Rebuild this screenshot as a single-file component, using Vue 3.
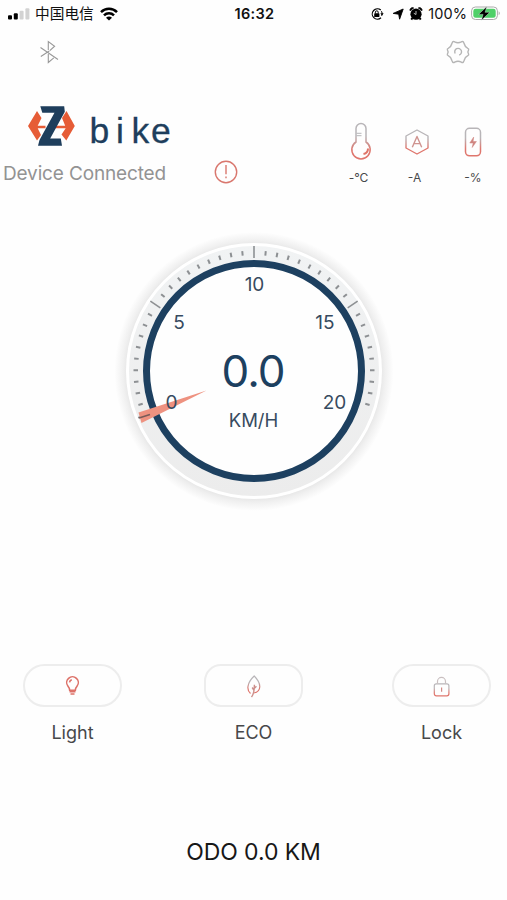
<script setup>
import { ref, computed } from 'vue'

const speed = ref(0)
const odo = ref(0)
const STEP = 5.6

const ticks = Array.from({ length: 40 }, (_, i) => ({
  angle: (i - 20) * STEP,
  major: i % 10 === 0
}))

const labels = [
  { text: '0', x: 57.5, y: 178 },
  { text: '5', x: 65, y: 98 },
  { text: '10', x: 140.5, y: 60 },
  { text: '15', x: 211, y: 98 },
  { text: '20', x: 220.5, y: 178 }
]

const needle = computed(() => `rotate(${speed.value * 2 * STEP} 140 140)`)
</script>

<template>
  <main class="screen">
    <header class="status-bar">
      <div class="status-left">
        <svg width="23" height="14" viewBox="0 0 23 14">
          <rect x="0" y="8.3" width="4" height="4.2" rx="1" />
          <rect x="5.8" y="6.3" width="4" height="6.2" rx="1" />
          <rect x="11.6" y="3.8" width="4" height="8.7" rx="1" fill="#d2d2d2" />
          <rect x="17.4" y="1.2" width="4" height="11.3" rx="1" fill="#d2d2d2" />
        </svg>
        <span class="carrier">中国电信</span>
        <svg class="wifi" width="18" height="14" viewBox="0 0 18 14" fill="none" stroke="#000" stroke-width="2.5">
          <path d="M1 5.1C5.5.6 12.5.6 17 5.1M4 8.4c2.8-2.8 7.2-2.8 10 0" />
          <path d="M6 10.7c1.7-1.6 4.3-1.6 6 0L9 13.6z" fill="#000" stroke="none" />
        </svg>
      </div>
      <strong class="clock">16:32</strong>
      <div class="status-right">
        <svg width="14" height="14" viewBox="0 0 14 14" fill="none" stroke="#000">
          <path d="M10.8 3A5.2 5.2 0 1 0 11 10.8" stroke-width="1.2" />
          <path d="M11.5 4.2a5 5 0 0 1 .2 4.6" stroke-width="1" />
          <path d="M10.3 6.2h3.4L12 8.6z" fill="#000" stroke="none" />
          <rect x="4.2" y="6.3" width="5.2" height="3.8" rx=".7" fill="#000" stroke="none" />
          <path d="M5.4 6.5V5.2a1.4 1.4 0 0 1 2.8 0v1.3" />
        </svg>
        <svg class="arrow" width="12" height="12" viewBox="0 0 12 12"><path d="M11.2 1 7.6 11.2l-.9-5-5.5-.8z" stroke="#000" stroke-width=".9" /></svg>
        <svg class="alarm" width="14" height="14" viewBox="0 0 14 14">
          <path d="M1 3.7A2.5 2.5 0 0 1 4.7 1zM13 3.7A2.5 2.5 0 0 0 9.3 1z" stroke="#000" stroke-width=".8" />
          <circle cx="7" cy="7.2" r="5.6" />
          <path d="m3.3 11-1 1.6M10.7 11l1 1.6" stroke="#000" stroke-width="2" />
          <path d="M7 4v3.5L4.8 6.3" fill="none" stroke="#ccc" stroke-width=".9" />
        </svg>
        <span class="percent">100%</span>
        <svg width="30" height="15" viewBox="0 0 30 15">
          <rect x=".6" y="1" width="25.8" height="12.5" rx="3.8" fill="#fff" stroke="#aaa" />
          <rect x="2.3" y="2.7" width="22.4" height="9.1" rx="2.3" fill="#4fd069" />
          <path d="M27.7 5.2q2.2 2 0 4z" fill="#aaa" />
          <path d="m15.8.5-8.3 7.9h4.6l-1.7 5.9 8.4-8h-4.7z" stroke="#e4f7e8" stroke-width=".4" />
        </svg>
      </div>
    </header>

    <nav class="toolbar">
      <svg width="20" height="24" viewBox="0 0 20 24" fill="none" stroke="#999" stroke-width="1.1">
        <path d="m1.5 7.5 17.5 12M1.8 16.5l8.5-5.5M9.3 10V1.5l6.3 4.7-4.8 4.5M9.3 14v8.5l5.5-4.6" />
      </svg>
      <svg width="24" height="24" viewBox="0 0 24 24" fill="none" stroke="#b5b5b5" stroke-width="1.4" stroke-linejoin="round">
        <path d="M6.7 1.8q.8-.7 2 .1 3.3 1.7 6.6 0 1.2-.8 2-.1l.8 1.7q.8 3.5 3.7 4.8 1.2.5.8 1.6-1.5 2.1 0 4.2.4 1.1-.8 1.6-2.9 1.3-3.7 4.8l-.8 1.7q-.8.7-2-.1-3.3-1.7-6.6 0-1.2.8-2 .1l-.8-1.7q-.8-3.5-3.7-4.8-1.2-.5-.8-1.6 1.5-2.1 0-4.2-.4-1.1.8-1.6 2.9-1.3 3.7-4.8z" />
        <path d="M9.2 13.5a3.4 3.4 0 1 1 4 1.5" />
      </svg>
    </nav>

    <section class="overview">
      <div class="brand">
        <svg width="180" height="52" viewBox="0 0 180 52">
          <g fill="#e65c36">
            <path d="m37 11-9 15 9 14.5 4-5.5-3.3-6.7h7.8v-2.6h-7.8l3.8-7.7z" />
            <path d="m66.5 11 8.3 15-8.5 14.5-4.8-6 4.2-6.2H55v-2.6h10.2L62 18z" />
          </g>
          <path d="M40.3 6.2h23.9l.6 5.5L50.2 38.6h10.6l1.2 7.2H38l1.5-5.8L54.5 12.8H42.3z" fill="#1e3e5c" />
          <text class="brand-name" x="89.5 116 131.5 151" y="43">bike</text>
        </svg>
        <div class="device">
          <span>Device Connected</span>
          <svg width="24" height="24" viewBox="0 0 24 24" fill="none" stroke="#d9776e" stroke-width="1.4">
            <circle cx="12" cy="12" r="10.7" />
            <path d="M12 5v9.2M12 16.5v1.7" />
          </svg>
        </div>
      </div>
      <div class="stats">
        <div class="stat">
          <svg width="24" height="40" viewBox="0 0 24 40" fill="none" stroke="url(#warm)" stroke-width="1.5">
            <defs>
              <linearGradient id="warm" x1="0" y1="0" x2="0" y2="1">
                <stop offset=".35" stop-color="#b8b5b8" />
                <stop offset=".75" stop-color="#df766d" />
              </linearGradient>
            </defs>
            <path d="M7 20V6.5a5 5 0 0 1 10 0V20a9.2 9.2 0 1 1-10 0z" />
            <path d="M7.5 11.3h5M7.5 13.7h5" stroke="#b6b6b8" stroke-width="1" />
            <path d="M14.5 32q4.5-1 4.5-5.5" stroke="#df7568" stroke-width="2" />
          </svg>
          <span>-°C</span>
        </div>
        <div class="stat">
          <svg width="26" height="40" viewBox="0 0 26 40" fill="none" stroke="url(#warm)" stroke-width="1.4" stroke-linejoin="round">
            <path d="m13 8 11 6v12l-11 6-11-6V14z" />
            <path d="m8.3 25.2 4.7-10.7 4.7 10.7M10 21.6h6" stroke="#cf9490" />
          </svg>
          <span>-A</span>
        </div>
        <div class="stat">
          <svg width="20" height="40" viewBox="0 0 20 40" fill="none" stroke="url(#warm)" stroke-width="1.5">
            <rect x="2.5" y="6.3" width="15" height="27.5" rx="4" />
            <path d="M10.7 15 6.8 21h3.4l-1 4.5 4.2-6h-3.3z" fill="#cf8580" stroke="#cf8580" stroke-width=".5" />
          </svg>
          <span class="charge">-%</span>
        </div>
      </div>
    </section>

    <section class="gauge">
      <svg width="280" height="280" viewBox="0 0 280 280">
        <defs>
          <radialGradient id="halo">
            <stop offset=".89" stop-color="#e1e1e1" />
            <stop offset=".94" stop-color="#f0f0f0" />
            <stop offset="1" stop-color="#fefefe" />
          </radialGradient>
          <linearGradient id="rim" x1="0" y1="0" x2="0" y2="1">
            <stop offset="0" stop-color="#f1f3f4" />
            <stop offset="1" stop-color="#ececec" />
          </linearGradient>
        </defs>
        <circle cx="140" cy="140.5" r="139.5" fill="url(#halo)" />
        <circle cx="140" cy="140" r="126.5" fill="url(#rim)" stroke="#fff" stroke-width="3" />
        <circle cx="140" cy="140" r="107.5" fill="#fefefe" stroke="#1d4060" stroke-width="7" />
        <line
          v-for="tick in ticks"
          :key="tick.angle"
          x1="140"
          x2="140"
          :y1="tick.major ? 15 : 19.5"
          :y2="tick.major ? 27 : 24"
          :transform="`rotate(${tick.angle} 140 140)`"
          stroke="#8d9093"
          :stroke-width="tick.major ? 1.6 : 2"
        />
        <path d="m92.5 159.5-68 22 3 10.5z" fill="#ee9280" :transform="needle" />
        <path d="m25 187 11-3.5" stroke="#795b58" stroke-width="1.6" />
        <text v-for="label in labels" :key="label.text" class="scale" :x="label.x" :y="label.y">{{ label.text }}</text>
        <text class="speed" x="139" y="156">{{ speed.toFixed(1) }}</text>
        <text class="unit" x="139.5" y="196">KM/H</text>
      </svg>
    </section>

    <section class="controls">
      <div class="control">
        <button aria-label="Light">
          <svg width="24" height="24" viewBox="0 0 24 24" fill="none" stroke="#dd7168" stroke-width="1.6">
            <path d="M8.7 16.2q0-2-1.7-4a5.8 5.8 0 1 1 9 0q-1.7 2-1.7 4z" />
            <path d="M8.5 8.3q.4-2 2.3-2.5M8.5 17.8h6M9.5 20h4" />
          </svg>
        </button>
        <span>Light</span>
      </div>
      <div class="control eco">
        <button aria-label="ECO">
          <svg width="24" height="24" viewBox="0 0 24 24" fill="none" stroke="url(#warm)" stroke-width="1.2">
            <path d="M8.5 19.5Q5.3 16.8 6 12.3 6.8 7 12.2 2q5.6 5.5 5.6 10.7-.3 5.5-6.3 6.3" />
            <path d="M9.5 23q2.9-3.5 2.9-12.3M11.8 16l-1.6-2.5M12.2 14.5l2.2-2.2" stroke="#cc8f8b" stroke-width="1.4" />
          </svg>
        </button>
        <span>ECO</span>
      </div>
      <div class="control">
        <button aria-label="Lock">
          <svg width="24" height="24" viewBox="0 0 24 24" fill="none" stroke="url(#warm)" stroke-width="1.2">
            <rect x="4.3" y="9.8" width="14.6" height="12" rx="2" />
            <path d="M7.5 9.5V7.4a4 4 0 0 1 8 0v2" stroke="#c9bfc0" />
            <path d="M11.6 13.5v4.3" stroke="#d28a86" />
          </svg>
        </button>
        <span>Lock</span>
      </div>
    </section>

    <footer class="odo">ODO {{ odo.toFixed(1) }} KM</footer>
  </main>
</template>

<style>
body { background: #fefefe; }
</style>

<style scoped>
.screen { display: flex; flex-direction: column; box-sizing: border-box; width: 507px; height: 900px; overflow: hidden; background: #fefefe; font-family: Inter, "Noto Sans CJK SC", sans-serif; color: #47484a; }
svg { display: block; flex: none; }
.status-bar { display: grid; grid-template-columns: 1fr auto 1fr; align-items: center; height: 27px; padding: 0 6px 0 8px; color: #111; }
.status-left, .status-right { display: flex; align-items: center; }
.status-right { justify-content: flex-end; }
.carrier { margin-left: 4px; font-size: 14.7px; line-height: 20px; }
.wifi { margin-left: 6px; }
.clock { font-size: 14.5px; font-weight: 600; letter-spacing: .3px; }
.arrow { margin-left: 8px; }
.alarm { margin-left: 5px; }
.percent { margin: 0 4px 0 5px; font-size: 14.5px; letter-spacing: .1px; }
.toolbar { display: flex; justify-content: space-between; align-items: center; height: 50px; padding: 0 37px 0 39px; }
.overview { display: flex; justify-content: space-between; height: 114px; padding: 23px 6px 0 0; }
.brand-name { font: 35.5px "Liberation Sans", sans-serif; fill: #1e3e5c; stroke: #1e3e5c; stroke-width: .3; }
.device { display: flex; align-items: flex-start; justify-content: space-between; width: 235px; margin-top: 8px; padding-left: 3px; font-size: 19px; line-height: 24px; letter-spacing: -.15px; color: #939393; }
.device span { padding-top: 2px; }
.stats { display: flex; padding-top: 22px; }
.stat { display: flex; flex-direction: column; align-items: center; gap: 8px; width: 56px; font-size: 12px; line-height: 16px; }
.stat span { margin-right: 5px; }
.stat .charge { margin-right: 0; }
.gauge { display: flex; justify-content: center; padding: 16.5px 0 0 1px; }
.gauge text { text-anchor: middle; fill: #374b60; }
.gauge .scale { font-size: 19px; }
.gauge .speed { font-size: 44px; letter-spacing: -1px; fill: #1d4060; }
.gauge .unit { font-size: 18.5px; }
.controls { display: flex; justify-content: space-between; padding: 153.5px 16px 0 23px; }
.control { display: flex; flex-direction: column; align-items: center; gap: 14px; font-size: 18px; line-height: 24px; }
.control button { display: flex; align-items: center; justify-content: center; box-sizing: border-box; width: 99px; height: 43px; padding: 0; border: 2px solid #ededed; border-radius: 22px; background: #fefefe; }
.eco { margin-right: 7px; }
.eco button { border-radius: 17px; }
.odo { margin-top: 92px; text-align: center; font-size: 23px; line-height: 30px; letter-spacing: -.1px; color: #171717; }
</style>
